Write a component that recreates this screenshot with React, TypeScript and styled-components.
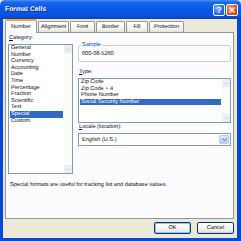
import React from "react";
import styled, { createGlobalStyle } from "styled-components";

const GlobalStyle = createGlobalStyle`
  html, body {
    margin: 0;
    padding: 0;
    background: #ffffff;
  }
  body {
    font-family: "Liberation Sans", Arial, sans-serif;
    font-size: 5.6px;
    color: #111;
    text-rendering: geometricPrecision;
  }
  * {
    box-sizing: border-box;
  }
`;

const Window = styled.div`
  width: 241px;
  height: 241px;
  display: flex;
  flex-direction: column;
  background: #ece9d8;
  overflow: hidden;
`;

const TitleBar = styled.div`
  flex: none;
  height: 19px;
  display: flex;
  align-items: center;
  padding: 0 3px 0 5px;
  border-radius: 5px 5px 0 0;
  background: linear-gradient(
    to bottom,
    #4a93fa 0%,
    #1a66ec 12%,
    #0a58e6 45%,
    #0856e2 75%,
    #0a49ce 92%,
    #0c3fb4 100%
  );
`;

const Title = styled.span`
  flex: 1;
  color: #fff;
  font-weight: bold;
  font-size: 6.8px;
  text-shadow: 1px 1px 0 #0b2c8c;
`;

const CaptionButton = styled.div<{ $close?: boolean }>`
  width: 12px;
  height: 12px;
  margin-left: 1px;
  border: 1px solid #fff;
  border-radius: 2px;
  display: flex;
  align-items: center;
  justify-content: center;
  color: #fff;
  font-weight: bold;
  font-size: 9px;
  background: ${(p) =>
    p.$close
      ? "radial-gradient(circle at 30% 30%, #f19a7c 0%, #e0532d 55%, #c23a15 100%)"
      : "radial-gradient(circle at 30% 30%, #7fb0ff 0%, #2a6cf0 55%, #1a4fd0 100%)"};
`;

const Frame = styled.div`
  flex: 1;
  display: flex;
  flex-direction: column;
  border-style: solid;
  border-color: #0a47d6;
  border-width: 0 4px 3px 3px;
  padding: 0 3px 4px 2px;
`;

const TabStrip = styled.div`
  flex: none;
  height: 13px;
  display: flex;
  align-items: flex-end;
  gap: 1px;
  position: relative;
  z-index: 1;
`;

const Tab = styled.div<{ $width: number; $active?: boolean }>`
  width: ${(p) => p.$width}px;
  height: ${(p) => (p.$active ? 14 : 11)}px;
  margin-bottom: ${(p) => (p.$active ? -1 : 0)}px;
  display: flex;
  align-items: center;
  justify-content: center;
  border: 1px solid #919b9c;
  border-bottom: none;
  border-radius: 2px 2px 0 0;
  border-top: ${(p) => (p.$active ? "2px solid #f5a63a" : "1px solid #919b9c")};
  background: ${(p) =>
    p.$active ? "#fcfcfe" : "linear-gradient(to bottom, #ffffff, #f3f2ec 70%, #e3e1d7)"};
`;

const Panel = styled.div`
  height: 187px;
  flex: none;
  border: 1px solid #919b9c;
  background: #fcfcfe;
  padding: 2px 2px 0 2px;
  display: flex;
  flex-direction: column;
`;

const Columns = styled.div`
  display: grid;
  grid-template-columns: 65px 153px;
  column-gap: 5px;
`;

const Column = styled.div`
  display: flex;
  flex-direction: column;
`;

const FieldLabel = styled.div<{ $top?: number }>`
  height: 7px;
  line-height: 7px;
  padding-left: 1px;
  margin-top: ${(p) => p.$top ?? 0}px;
  margin-bottom: 2px;
`;

const ListBox = styled.div<{ $height: number }>`
  height: ${(p) => p.$height}px;
  border: 1px solid #7f9db9;
  background: #fff;
  display: flex;
`;

const Items = styled.div`
  flex: 1;
  padding: 0 1px 0 1px;
`;

const Item = styled.div<{ $selected?: boolean }>`
  height: 6.6px;
  line-height: 6.6px;
  padding-left: 1px;
  white-space: nowrap;
  overflow: hidden;
  background: ${(p) => (p.$selected ? "#316ac5" : "transparent")};
  color: ${(p) => (p.$selected ? "#fff" : "#111")};
`;

const ScrollBar = styled.div`
  width: 8px;
  display: flex;
  flex-direction: column;
  justify-content: space-between;
  background: #fbfbf8;
`;

const ScrollArrow = styled.div`
  height: 8px;
  border: 1px solid #e8ebf4;
  border-radius: 1px;
  background: #eef1f8;
  display: flex;
  align-items: center;
  justify-content: center;
`;

const GroupBox = styled.fieldset<{ $top: number }>`
  margin: ${(p) => p.$top}px 0 0 0;
  height: 20px;
  padding: 0 3px;
  border: 1px solid #d0d0bf;
  border-radius: 2px;
  legend {
    color: #0046d5;
    padding: 0 1px;
    margin-left: -1px;
    line-height: 7px;
  }
`;

const SampleValue = styled.div`
  line-height: 7px;
  padding-top: 2px;
`;

const Combo = styled.div`
  height: 13px;
  border: 1px solid #7f9db9;
  background: #fff;
  display: flex;
  align-items: center;
  padding: 1px;
`;

const ComboText = styled.div`
  flex: 1;
  padding-left: 2px;
`;

const ComboButton = styled.div`
  width: 10px;
  height: 100%;
  border: 1px solid #b9cdf6;
  border-radius: 1px;
  background: linear-gradient(to bottom, #dbe6fe, #b7cbf8);
  display: flex;
  align-items: center;
  justify-content: center;
`;

const Description = styled.div`
  margin-top: 8px;
  padding-left: 2px;
  line-height: 7px;
`;

const ButtonRow = styled.div`
  flex: none;
  margin-top: 3px;
  height: 12px;
  display: flex;
  justify-content: flex-end;
  gap: 6px;
`;

const PushButton = styled.div<{ $default?: boolean }>`
  width: 37px;
  height: 12px;
  border: 1px solid #003c74;
  border-radius: 2px;
  display: flex;
  align-items: center;
  justify-content: center;
  background: linear-gradient(to bottom, #ffffff, #f4f3ee 60%, #e3e0d4);
  box-shadow: ${(p) => (p.$default ? "inset 0 0 0 1px #9ebcf2" : "inset 0 -1px 0 #d6d0c5")};
`;

const Chevron = ({ up, color = "#c4cbdc" }: { up?: boolean; color?: string }) => (
  <svg width="5" height="3" viewBox="0 0 5 3">
    <path
      d={up ? "M0.5 2.5 L2.5 0.5 L4.5 2.5" : "M0.5 0.5 L2.5 2.5 L4.5 0.5"}
      fill="none"
      stroke={color}
      strokeWidth="1"
    />
  </svg>
);

const Scroll = () => (
  <ScrollBar>
    <ScrollArrow>
      <Chevron up />
    </ScrollArrow>
    <ScrollArrow>
      <Chevron />
    </ScrollArrow>
  </ScrollBar>
);

const tabs = [
  { label: "Number", width: 32, active: true },
  { label: "Alignment", width: 31 },
  { label: "Font", width: 25 },
  { label: "Border", width: 29 },
  { label: "Fill", width: 22 },
  { label: "Protection", width: 35 },
];

const categories = [
  "General",
  "Number",
  "Currency",
  "Accounting",
  "Date",
  "Time",
  "Percentage",
  "Fraction",
  "Scientific",
  "Text",
  "Special",
  "Custom",
];

const types = ["Zip Code", "Zip Code + 4", "Phone Number", "Social Security Number"];

export default function App() {
  return (
    <>
      <GlobalStyle />
      <Window>
        <TitleBar>
          <Title>Format Cells</Title>
          <CaptionButton>?</CaptionButton>
          <CaptionButton $close>
            <svg width="6" height="6" viewBox="0 0 6 6">
              <path d="M0.5 0.5 L5.5 5.5 M5.5 0.5 L0.5 5.5" stroke="#fff" strokeWidth="1.4" />
            </svg>
          </CaptionButton>
        </TitleBar>
        <Frame>
          <TabStrip>
            {tabs.map((t) => (
              <Tab key={t.label} $width={t.width} $active={t.active}>
                {t.label}
              </Tab>
            ))}
          </TabStrip>
          <Panel>
            <Columns>
              <Column>
                <FieldLabel>
                  <u>C</u>ategory:
                </FieldLabel>
                <ListBox $height={130}>
                  <Items>
                    {categories.map((c) => (
                      <Item key={c} $selected={c === "Special"}>
                        {c}
                      </Item>
                    ))}
                  </Items>
                  <Scroll />
                </ListBox>
              </Column>
              <Column>
                <GroupBox $top={7}>
                  <legend>Sample</legend>
                  <SampleValue>000-08-5260</SampleValue>
                </GroupBox>
                <FieldLabel $top={7}>
                  <u>T</u>ype:
                </FieldLabel>
                <ListBox $height={45}>
                  <Items>
                    {types.map((t) => (
                      <Item key={t} $selected={t === "Social Security Number"}>
                        {t}
                      </Item>
                    ))}
                  </Items>
                  <Scroll />
                </ListBox>
                <FieldLabel $top={1}>
                  <u>L</u>ocale (location):
                </FieldLabel>
                <Combo>
                  <ComboText>English (U.S.)</ComboText>
                  <ComboButton>
                    <Chevron color="#4d6185" />
                  </ComboButton>
                </Combo>
              </Column>
            </Columns>
            <Description>Special formats are useful for tracking list and database values.</Description>
          </Panel>
          <ButtonRow>
            <PushButton $default>OK</PushButton>
            <PushButton>Cancel</PushButton>
          </ButtonRow>
        </Frame>
      </Window>
    </>
  );
}
